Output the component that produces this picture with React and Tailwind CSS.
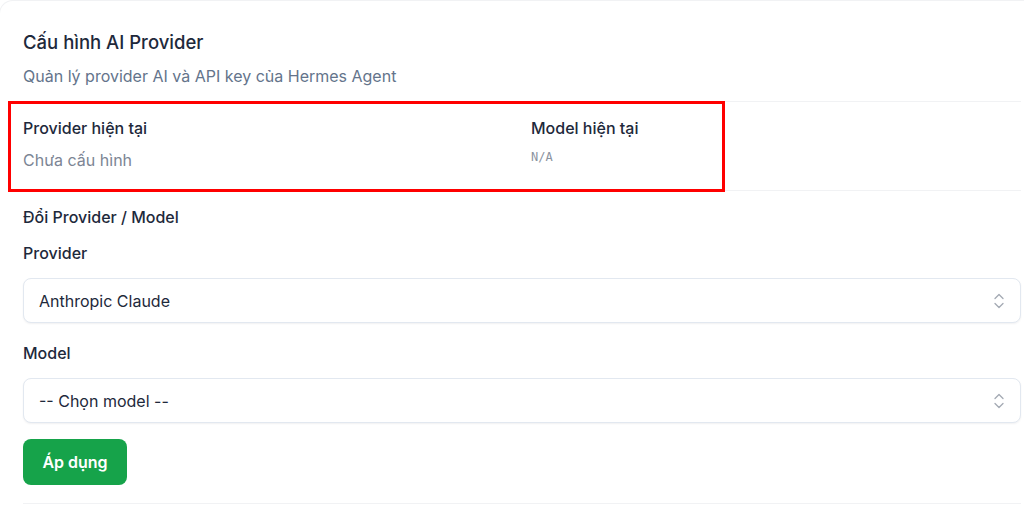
import React from "react";

function Chevrons() {
  return (
    <svg width="12" height="18" viewBox="0 0 12 18" fill="none" stroke="#a3a9b3" strokeWidth="1.3" strokeLinecap="round" strokeLinejoin="round">
      <polyline points="2,6.5 6,2.5 10,6.5" />
      <polyline points="2,11.5 6,15.5 10,11.5" />
    </svg>
  );
}

function Select({ value }) {
  return (
    <div className="flex h-[45px] items-center justify-between rounded-lg border border-[#e2e8f0] bg-white pl-[15px] pr-[15px] shadow-[0_1px_2px_rgba(15,23,42,0.06)]">
      <span className="text-[16px] text-[#1e293b]">{value}</span>
      <Chevrons />
    </div>
  );
}

export default function App() {
  return (
    <div className="h-[514px] w-screen overflow-hidden bg-white" style={{ fontFamily: "Inter, 'Noto Sans', sans-serif" }}>
      <div className="ml-[-1px] h-[600px] w-[1100px] rounded-tl-[14px] border-l border-t border-[#f1f2f4] bg-white pl-[23px]">
        <div className="w-[998px]">
          <div className="pt-[27px] text-[18.5px] leading-[28px] font-medium text-[#1e293b]">Cấu hình AI Provider</div>
          <div className="mt-[8px] text-[16px] leading-[24px] text-[#64748b]">Quản lý provider AI và API key của Hermes Agent</div>

          <div className="relative mt-[13px] grid grid-cols-2 gap-[18px] border-y border-[#f1f2f4] pt-[14px] pb-[18px]">
            <div>
              <div className="text-[16px] leading-[24px] font-medium text-[#1e293b]">Provider hiện tại</div>
              <div className="mt-[8px] text-[16px] leading-[24px] text-[#7c8594]">Chưa cấu hình</div>
            </div>
            <div>
              <div className="text-[16px] leading-[24px] font-medium text-[#1e293b]">Model hiện tại</div>
              <div className="mt-[7px] text-[12px] leading-[20px] text-[#8b93a0]" style={{ fontFamily: "'DejaVu Sans Mono', monospace" }}>N/A</div>
            </div>
            <div className="pointer-events-none absolute left-[-15px] top-[-1px] h-[91px] w-[717px] border-[3px] border-[#ff0000]" />
          </div>

          <div className="mt-[14px] text-[16px] leading-[24px] font-medium text-[#1e293b]">Đổi Provider / Model</div>
          <div className="mt-[12px] text-[16px] leading-[24px] font-medium text-[#1e293b]">Provider</div>
          <div className="mt-[13px]"><Select value="Anthropic Claude" /></div>
          <div className="mt-[18px] text-[16px] leading-[24px] font-medium text-[#1e293b]">Model</div>
          <div className="mt-[13px]"><Select value="-- Chọn model --" /></div>
          <button className="mt-[16px] flex h-[46px] w-[104px] items-center justify-center rounded-lg bg-[#16a34a] text-[16px] font-semibold text-white">Áp dụng</button>
          <div className="mt-[18px] border-t border-[#f1f2f4]" />
        </div>
      </div>
    </div>
  );
}
